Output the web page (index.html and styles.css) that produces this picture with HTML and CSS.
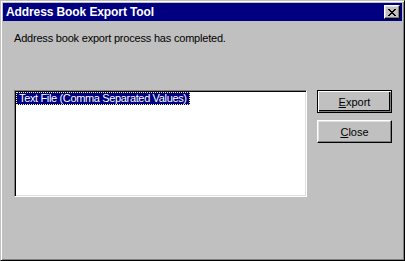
FILE: index.html
```html
<!DOCTYPE html>
<html lang="en">
<head>
    <meta charset="UTF-8">
    <title>Address Book Export Tool</title>
    <link rel="stylesheet" href="styles.css">
</head>
<body>
    <div class="window">
        <div class="titlebar">
            <span class="title">Address Book Export Tool</span>
            <button class="close-x" aria-label="Close">
                <svg width="8" height="7" viewBox="0 0 8 7">
                    <path d="M0 0h2v1h1v1h2v-1h1v-1h2v1h-1v1h-1v1h-1v1h1v1h1v1h1v1h-2v-1h-1v-1h-2v1h-1v1h-2v-1h1v-1h1v-1h1v-1h-1v-1h-1v-1h-1z" fill="#000"/>
                </svg>
            </button>
        </div>
        <div class="content">
            <p class="message">Address book export process has completed.</p>
            <div class="row">
                <div class="listbox">
                    <div class="item selected">Text File (Comma Separated Values)</div>
                </div>
                <div class="buttons">
                    <button class="btn default"><span class="key">E</span>xport</button>
                    <button class="btn"><span class="key">C</span>lose</button>
                </div>
            </div>
        </div>
    </div>
</body>
</html>
```

FILE: styles.css
```css
* {
    margin: 0;
    padding: 0;
    box-sizing: border-box;
}
body {
    font-family: 'Liberation Sans', Arial, sans-serif;
    font-size: 11px;
    background: #c0c0c0;
}
.window {
    width: 405px;
    height: 261px;
    background: #c0c0c0;
    border: 1px solid;
    border-color: #c0c0c0 #000 #000 #c0c0c0;
    box-shadow: inset 1px 1px #fff, inset -1px -1px #808080;
    padding: 2px;
    display: flex;
    flex-direction: column;
}
.titlebar {
    height: 18px;
    background: #000080;
    color: #fff;
    display: flex;
    align-items: center;
    justify-content: space-between;
    padding: 0 2px 0 3px;
}
.title {
    font-weight: bold;
    font-size: 12px;
    letter-spacing: -0.1px;
}
.close-x {
    width: 16px;
    height: 14px;
    background: #c0c0c0;
    border: 1px solid;
    border-color: #fff #000 #000 #fff;
    box-shadow: inset -1px -1px #808080, inset 1px 1px #dfdfdf;
    display: flex;
    align-items: center;
    justify-content: center;
    padding-top: 1px;
}
.close-x svg {
    display: block;
}
.content {
    padding: 11px 0 0 11px;
}
.message {
    line-height: 13px;
    color: #000;
    letter-spacing: -0.2px;
}
.row {
    display: flex;
    margin-top: 45px;
}
.listbox {
    width: 293px;
    height: 107px;
    background: #fff;
    border: 1px solid;
    border-color: #808080 #fff #fff #808080;
    box-shadow: inset 1px 1px #000, inset -1px -1px #dfdfdf;
    padding: 1px;
}
.item {
    display: inline-block;
    height: 13px;
    line-height: 11px;
    padding: 0 2px;
    color: #000;
    white-space: nowrap;
    letter-spacing: -0.35px;
}
.item.selected {
    background: #000080;
    color: #fff;
    border: 1px dotted #ffffa0;
}
.buttons {
    display: flex;
    flex-direction: column;
    gap: 7px;
    margin-left: 10px;
}
.btn {
    width: 75px;
    height: 23px;
    font-family: 'Liberation Sans', Arial, sans-serif;
    font-size: 11px;
    color: #000;
    background: #c0c0c0;
    border: 1px solid;
    border-color: #fff #000 #000 #fff;
    box-shadow: inset -1px -1px #808080, inset 1px 1px #dfdfdf;
}
.btn.default {
    border-color: #000;
    box-shadow: inset 1px 1px #fff, inset -1px -1px #808080, inset -2px -2px #000;
}
.key {
    text-decoration: underline;
}
```
